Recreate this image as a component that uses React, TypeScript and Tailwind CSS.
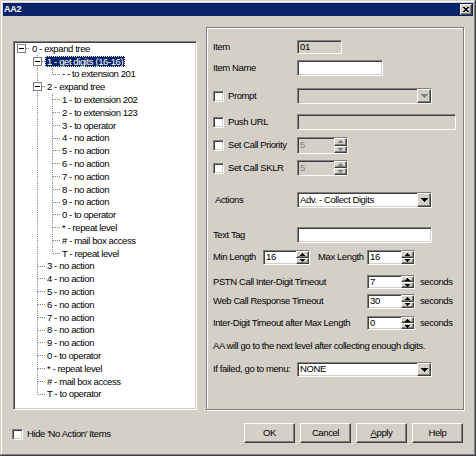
import React from "react";

// classic win2k bevels
const SUNKEN =
  "border border-t-[#808080] border-l-[#808080] border-b-white border-r-white shadow-[inset_1px_1px_0_#404040,inset_-1px_-1px_0_#d4d0c8]";
const RAISED =
  "border border-t-white border-l-white border-b-[#404040] border-r-[#404040] shadow-[inset_-1px_-1px_0_#808080,inset_1px_1px_0_#d4d0c8] bg-[#d4d0c8]";

type Node = { lv: number; t: string; box?: boolean; sel?: boolean };

const NODES: Node[] = [
  { lv: 0, t: "0 - expand tree", box: true },
  { lv: 1, t: "1 - get digits (16-16)", box: true, sel: true },
  { lv: 2, t: "- - to extension 201" },
  { lv: 1, t: "2 - expand tree", box: true },
  ...[
    "1 - to extension 202",
    "2 - to extension 123",
    "3 - to operator",
    "4 - no action",
    "5 - no action",
    "6 - no action",
    "7 - no action",
    "8 - no action",
    "9 - no action",
    "0 - to operator",
    "* - repeat level",
    "# - mail box access",
    "T - repeat level",
  ].map((t) => ({ lv: 2, t })),
  ...[
    "3 - no action",
    "4 - no action",
    "5 - no action",
    "6 - no action",
    "7 - no action",
    "8 - no action",
    "9 - no action",
    "0 - to operator",
    "* - repeat level",
    "# - mail box access",
    "T - to operator",
  ].map((t) => ({ lv: 1, t })),
];

const ROW_H = 12.8;

// true when a later sibling exists at this level
function hasLater(i: number, lv: number) {
  for (let j = i + 1; j < NODES.length; j++) {
    if (NODES[j].lv < lv) return false;
    if (NODES[j].lv === lv) return true;
  }
  return false;
}

function Guide({
  w,
  top,
  bottom,
  horiz,
  box,
}: {
  w: number;
  top?: boolean;
  bottom?: boolean;
  horiz?: boolean;
  box?: boolean;
}) {
  const m = 6.5;
  const dot = { stroke: "#808080", strokeWidth: 1, strokeDasharray: "1 1" };
  return (
    <svg width={w} height={ROW_H} className="block shrink-0">
      {top && <line x1={7.5} y1={0} x2={7.5} y2={m} {...dot} />}
      {bottom && <line x1={7.5} y1={m} x2={7.5} y2={ROW_H} {...dot} />}
      {horiz && <line x1={8} y1={m} x2={w} y2={m} {...dot} />}
      {box && (
        <>
          <rect x={3.5} y={m - 4} width={8} height={8} fill="#fff" stroke="#808080" />
          <line x1={5} y1={m} x2={10} y2={m} stroke="#000" />
        </>
      )}
    </svg>
  );
}

function Tree() {
  return (
    <div className={`w-[184px] h-[369px] bg-white ${SUNKEN} overflow-hidden`}>
      {NODES.map((n, i) => {
        const cells = [];
        for (let c = 0; c <= n.lv; c++) {
          const w = c === 0 ? 16 : 15;
          if (c < n.lv) {
            cells.push(<Guide key={c} w={w} top={c > 0 && hasLater(i, c)} bottom={c > 0 && hasLater(i, c)} />);
          } else {
            cells.push(<Guide key={c} w={w} top={c > 0} bottom={hasLater(i, c)} horiz box={n.box} />);
          }
        }
        return (
          <div key={i} className="flex items-center h-[12.8px]">
            {cells}
            <span
              className={`px-[1px] h-[11px] leading-[10px] whitespace-nowrap ${
                n.sel ? "bg-[#0a246a] text-white border border-dotted border-[#e8e8c0]" : "border border-transparent"
              }`}
            >
              {n.t}
            </span>
          </div>
        );
      })}
    </div>
  );
}

function Check() {
  return <div className={`w-[11px] h-[11px] bg-white shrink-0 ${SUNKEN}`} />;
}

function DownTri({ gray }: { gray?: boolean }) {
  return (
    <svg width="7" height="4" viewBox="0 0 7 4" className="block">
      <path d="M0 0h7v1h-1v1h-1v1h-1v1h-1v-1h-1v-1h-1v-1h-1z" fill={gray ? "#808080" : "#000"} />
    </svg>
  );
}

function SmallTri({ up, gray }: { up?: boolean; gray?: boolean }) {
  return (
    <svg width="5" height="3" viewBox="0 0 5 3" className="block">
      <path
        d={up ? "M2 0h1v1h1v1h1v1h-5v-1h1v-1h1z" : "M0 0h5v1h-1v1h-1v1h-1v-1h-1v-1h-1z"}
        fill={gray ? "#808080" : "#000"}
      />
    </svg>
  );
}

function Combo({ cls, text, disabled }: { cls: string; text?: string; disabled?: boolean }) {
  return (
    <div className={`flex items-stretch ${SUNKEN} ${disabled ? "bg-[#d4d0c8]" : "bg-white"} ${cls}`}>
      <span className="flex-1 flex items-center pl-[2px] whitespace-nowrap">{text}</span>
      <div className={`${RAISED} w-[14px] flex items-center justify-center`}>
        <DownTri gray={disabled} />
      </div>
    </div>
  );
}

function Spin({ cls, value, disabled }: { cls: string; value: string; disabled?: boolean }) {
  return (
    <div className={`flex items-stretch ${SUNKEN} ${disabled ? "bg-[#d4d0c8] text-[#808080]" : "bg-white"} ${cls}`}>
      <span className="flex-1 flex items-center pl-[2px]">{value}</span>
      <div className="flex flex-col w-[13px]">
        <div className={`${RAISED} flex-1 flex items-center justify-center`}>
          <SmallTri up gray={disabled} />
        </div>
        <div className={`${RAISED} flex-1 flex items-center justify-center`}>
          <SmallTri gray={disabled} />
        </div>
      </div>
    </div>
  );
}

function Field({ cls, text, gray }: { cls: string; text?: string; gray?: boolean }) {
  return (
    <div className={`flex items-center pl-[2px] ${SUNKEN} ${gray ? "bg-[#d4d0c8]" : "bg-white"} ${cls}`}>
      {text}
    </div>
  );
}

function CheckLabel({ text }: { text: string }) {
  return (
    <div className="w-[84px] flex items-center gap-[4px] shrink-0">
      <Check />
      <span className="whitespace-nowrap">{text}</span>
    </div>
  );
}

function Btn({ children }: { children: React.ReactNode }) {
  return <div className={`${RAISED} w-[51px] h-[20px] flex items-center justify-center`}>{children}</div>;
}

export default function App() {
  return (
    <div
      className="w-[476px] h-[456px] bg-[#d4d0c8] p-[3px] text-black font-['Liberation_Sans',Arial,sans-serif] text-[9.5px] tracking-[-0.4px] shadow-[inset_-1px_-1px_0_#404040,inset_1px_1px_0_#d4d0c8,inset_-2px_-2px_0_#808080,inset_2px_2px_0_#ffffff] overflow-hidden"
    >
      {/* Title bar */}
      <div className="h-[13px] bg-[#0a246a] flex items-center justify-between pl-[1px] pr-[1px]">
        <span className="text-white font-bold text-[9px] tracking-[-0.2px]">AA2</span>
        <div className={`${RAISED} w-[12px] h-[11px] flex items-center justify-center`}>
          <svg width="6" height="5" viewBox="0 0 6 5" className="block">
            <path
              d="M0 0h2v1h2v-1h2v1h-1v1h-1v1h1v1h1v1h-2v-1h-2v1h-2v-1h1v-1h1v-1h-1v-1h-1z"
              fill="#000"
            />
          </svg>
        </div>
      </div>

      <div className="flex pl-[10px] gap-[9px]">
        {/* Left column */}
        <div className="flex flex-col">
          <div className="mt-[25px]">
            <Tree />
          </div>
          <div className="mt-[17px] flex items-center gap-[4px] ml-[-1px]">
            <Check />
            <span>{"Hide 'No Action' Items"}</span>
          </div>
        </div>

        {/* Right column */}
        <div className="flex flex-col">
          <div className="mt-[11px] w-[258px] h-[383px] border border-[#808080] shadow-[inset_1px_1px_0_#ffffff,1px_1px_0_#ffffff] pl-[6px] flex flex-col">
            <div className="mt-[12px] h-[14px] flex items-center">
              <span className="w-[84px] shrink-0">Item</span>
              <Field cls="w-[45px] h-full" text="01" gray />
            </div>
            <div className="mt-[6px] h-[16px] flex items-center">
              <span className="w-[84px] shrink-0">Item Name</span>
              <Field cls="w-[86px] h-full" />
            </div>
            <div className="mt-[12px] h-[16px] flex items-center">
              <CheckLabel text="Prompt" />
              <Combo cls="w-[135px] h-full" disabled />
            </div>
            <div className="mt-[10px] h-[16px] flex items-center">
              <CheckLabel text="Push URL" />
              <Field cls="w-[159px] h-full" gray />
            </div>
            <div className="mt-[7px] h-[17px] flex items-center">
              <CheckLabel text="Set Call Priority" />
              <Spin cls="w-[51px] h-full" value="5" disabled />
            </div>
            <div className="mt-[6px] h-[16px] flex items-center">
              <CheckLabel text="Set Call SKLR" />
              <Spin cls="w-[51px] h-full" value="5" disabled />
            </div>
            <div className="mt-[16px] h-[16px] flex items-center">
              <span className="w-[84px] shrink-0 pl-[2px]">Actions</span>
              <Combo cls="w-[135px] h-full" text="Adv. - Collect Digits" />
            </div>
            <div className="mt-[19px] h-[16px] flex items-center">
              <span className="w-[84px] shrink-0">Text Tag</span>
              <Field cls="w-[135px] h-full" />
            </div>
            <div className="mt-[7px] h-[15px] flex items-center">
              <span className="w-[50px] shrink-0">Min Length</span>
              <Spin cls="w-[47px] h-full" value="16" />
              <span className="w-[57px] shrink-0 pl-[8px]">Max Length</span>
              <Spin cls="w-[48px] h-full" value="16" />
            </div>
            <div className="mt-[10px] h-[14px] flex items-center">
              <span className="w-[154px] shrink-0">PSTN Call Inter-Digit Timeout</span>
              <Spin cls="w-[48px] h-full" value="7" />
              <span className="ml-[5px]">seconds</span>
            </div>
            <div className="mt-[5px] h-[15px] flex items-center">
              <span className="w-[154px] shrink-0">Web Call Response Timeout</span>
              <Spin cls="w-[48px] h-full" value="30" />
              <span className="ml-[5px]">seconds</span>
            </div>
            <div className="mt-[7px] h-[14px] flex items-center">
              <span className="w-[154px] shrink-0">Inter-Digit Timeout after Max Length</span>
              <Spin cls="w-[48px] h-full" value="0" />
              <span className="ml-[5px]">seconds</span>
            </div>
            <div className="mt-[10px] h-[12px] flex items-center whitespace-nowrap">
              AA will go to the next level after collecting enough digits.
            </div>
            <div className="mt-[10px] h-[15px] flex items-center">
              <span className="w-[84px] shrink-0">If failed, go to menu:</span>
              <Combo cls="w-[135px] h-full" text="NONE" />
            </div>
          </div>

          <div className="mt-[13px] flex justify-end gap-[5px] pr-[1px]">
            <Btn>OK</Btn>
            <Btn>Cancel</Btn>
            <Btn>
              <span>
                <span className="underline">A</span>pply
              </span>
            </Btn>
            <Btn>Help</Btn>
          </div>
        </div>
      </div>
    </div>
  );
}
